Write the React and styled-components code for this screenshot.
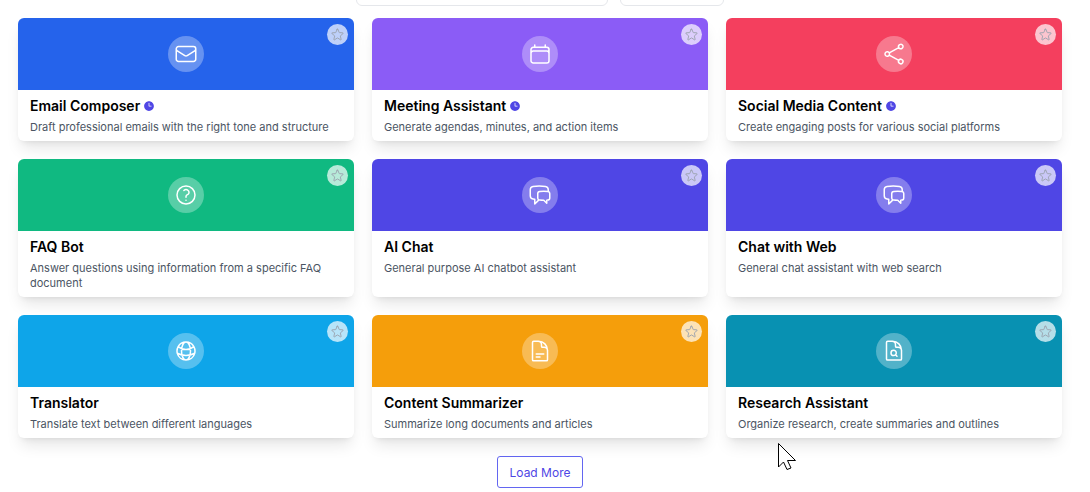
import React, { useState } from "react";
import styled, { createGlobalStyle } from "styled-components";
import {
  HiClock,
  HiOutlineCalendar,
  HiOutlineChatBubbleLeftRight,
  HiOutlineDocumentMagnifyingGlass,
  HiOutlineDocumentText,
  HiOutlineEnvelope,
  HiOutlineGlobeAlt,
  HiOutlineQuestionMarkCircle,
  HiOutlineShare,
  HiOutlineStar,
} from "react-icons/hi2";

const GlobalStyle = createGlobalStyle`
  * {
    box-sizing: border-box;
  }

  body {
    margin: 0;
    background-color: #fff;
    font-family: Inter, "Liberation Sans", sans-serif;
    overflow: hidden;
  }
`;

const Page = styled.main`
  padding: 0 28px 4px 18px;
`;

const Filters = styled.div`
  display: flex;
  justify-content: center;
  align-items: flex-end;
  gap: 12px;
  height: 6px;
  margin-bottom: 12px;
  overflow: hidden;
`;

const SearchInput = styled.input`
  width: 252px;
  height: 32px;
  border: 1px solid #e5e7eb;
  border-radius: 6px;
  background-color: #fff;
`;

const CategorySelect = styled.select`
  width: 104px;
  height: 32px;
  border: 1px solid #e5e7eb;
  border-radius: 6px;
  background-color: #fff;
  appearance: none;
`;

const Grid = styled.div`
  display: grid;
  grid-template-columns: repeat(3, 1fr);
  gap: 18px;
`;

const Card = styled.article`
  position: relative;
  overflow: hidden;
  border-radius: 6px;
  background-color: #fff;
  box-shadow: 0 10px 15px -3px rgba(0, 0, 0, 0.1), 0 4px 6px -4px rgba(0, 0, 0, 0.1);
`;

const Banner = styled.div`
  display: flex;
  align-items: center;
  justify-content: center;
  height: 72px;
  background-color: ${({ $color }) => $color};
`;

const IconCircle = styled.div`
  display: flex;
  align-items: center;
  justify-content: center;
  width: 36px;
  height: 36px;
  border-radius: 50%;
  background-color: rgba(255, 255, 255, 0.3);
  color: #fff;
  font-size: 24px;
`;

const FavoriteButton = styled.button`
  position: absolute;
  top: 6px;
  right: 6px;
  display: flex;
  align-items: center;
  justify-content: center;
  width: 21px;
  height: 21px;
  padding: 0;
  border: 0;
  border-radius: 50%;
  background-color: rgba(255, 255, 255, 0.7);
  color: ${({ $active }) => ($active ? "#f59e0b" : "#9ca3af")};
  font-size: 15px;
  cursor: pointer;
`;

const CardBody = styled.div`
  padding: 6px 12px;
`;

const Title = styled.h3`
  display: flex;
  align-items: center;
  gap: 3px;
  margin: 0 0 5px;
  color: #000;
  font-size: 14px;
  font-weight: 600;
  line-height: 19px;

  svg {
    color: #4f46e5;
    font-size: 12px;
  }
`;

const Description = styled.p`
  margin: 0;
  color: #4b5563;
  font-size: 11px;
  line-height: 15px;
`;

const Footer = styled.div`
  display: flex;
  justify-content: center;
  margin-top: 18px;
`;

const LoadMoreButton = styled.button`
  height: 32px;
  padding: 0 12px;
  border: 1px solid #6366f1;
  border-radius: 3px;
  background-color: #fff;
  color: #4f46e5;
  font-family: inherit;
  font-size: 12px;
  font-weight: 400;
  cursor: pointer;
`;

const Pointer = styled.svg`
  position: absolute;
  top: 443px;
  left: 778px;
  pointer-events: none;
`;

const tools = [
  { title: "Email Composer", description: "Draft professional emails with the right tone and structure", color: "#2563eb", icon: HiOutlineEnvelope, recent: true },
  { title: "Meeting Assistant", description: "Generate agendas, minutes, and action items", color: "#8b5cf6", icon: HiOutlineCalendar, recent: true },
  { title: "Social Media Content", description: "Create engaging posts for various social platforms", color: "#f43f5e", icon: HiOutlineShare, recent: true },
  { title: "FAQ Bot", description: "Answer questions using information from a specific FAQ document", color: "#10b981", icon: HiOutlineQuestionMarkCircle },
  { title: "AI Chat", description: "General purpose AI chatbot assistant", color: "#4f46e5", icon: HiOutlineChatBubbleLeftRight },
  { title: "Chat with Web", description: "General chat assistant with web search", color: "#4f46e5", icon: HiOutlineChatBubbleLeftRight },
  { title: "Translator", description: "Translate text between different languages", color: "#0ea5e9", icon: HiOutlineGlobeAlt },
  { title: "Content Summarizer", description: "Summarize long documents and articles", color: "#f59e0b", icon: HiOutlineDocumentText },
  { title: "Research Assistant", description: "Organize research, create summaries and outlines", color: "#0891b2", icon: HiOutlineDocumentMagnifyingGlass },
];

const ToolCard = ({ tool }) => {
  const [favorite, setFavorite] = useState(false);
  const Icon = tool.icon;

  return (
    <Card>
      <Banner $color={tool.color}>
        <IconCircle>
          <Icon />
        </IconCircle>
      </Banner>
      <FavoriteButton
        type="button"
        aria-label={`Favorite ${tool.title}`}
        aria-pressed={favorite}
        $active={favorite}
        onClick={() => setFavorite(!favorite)}
      >
        <HiOutlineStar />
      </FavoriteButton>
      <CardBody>
        <Title>
          {tool.title}
          {tool.recent && <HiClock />}
        </Title>
        <Description>{tool.description}</Description>
      </CardBody>
    </Card>
  );
};

const App = () => {
  return (
    <>
      <GlobalStyle />
      <Page>
        <Filters>
          <SearchInput type="search" aria-label="Search" />
          <CategorySelect aria-label="Category" />
        </Filters>
        <Grid>
          {tools.map((tool) => (
            <ToolCard key={tool.title} tool={tool} />
          ))}
        </Grid>
        <Footer>
          <LoadMoreButton type="button">Load More</LoadMoreButton>
        </Footer>
      </Page>
      <Pointer width="20" height="28" viewBox="0 0 20 28" aria-hidden="true">
        <path d="M0.5 0.5v23.5l5-5 3.5 7.5 4-1.5-3.5-7.5h8z" fill="#fff" stroke="#000" />
      </Pointer>
    </>
  );
};

export default App;
